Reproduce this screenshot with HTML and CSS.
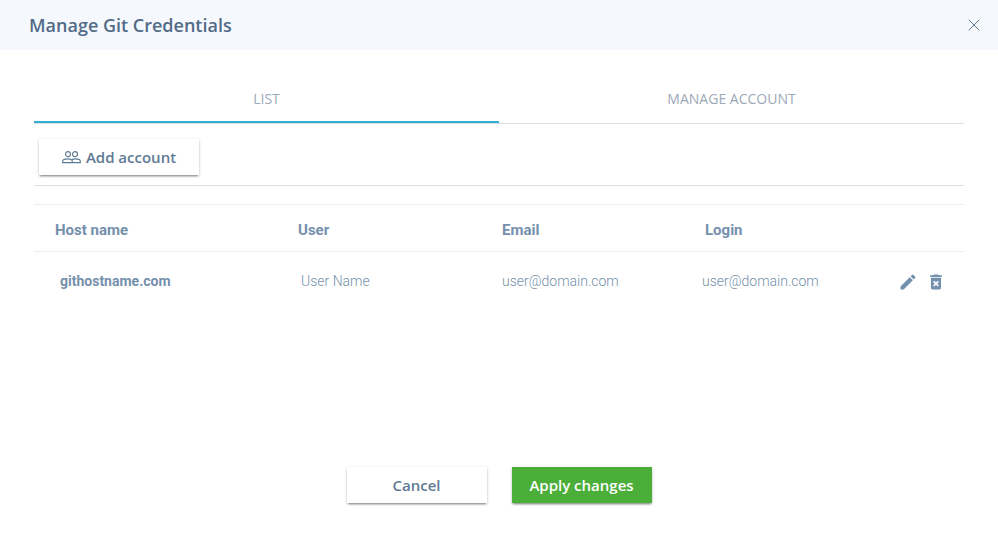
FILE: index.html
```html
<!DOCTYPE html>
<html lang="en">
<head>
<meta charset="utf-8">
<title>Manage Git Credentials</title>
<link rel="stylesheet" href="styles.css">
</head>
<body>
<div class="dialog" role="dialog" aria-labelledby="title">
  <header class="dialog-header">
    <h1 class="dialog-title" id="title">Manage Git Credentials</h1>
    <button class="icon-button" type="button" aria-label="Close">
      <svg width="12" height="12" viewBox="0 0 12 12" fill="none" stroke="currentColor"><path d="M.7.7l10.6 10.6M11.3.7L.7 11.3"/></svg>
    </button>
  </header>
  <main class="dialog-body">
    <div class="tabs" role="tablist">
      <button class="tab tab-active" type="button" role="tab" aria-selected="true">LIST</button>
      <button class="tab" type="button" role="tab" aria-selected="false">MANAGE ACCOUNT</button>
    </div>
    <div class="toolbar">
      <button class="button button-add" type="button">
        <svg width="19" height="14" viewBox="0 0 20 14" fill="none" stroke="currentColor" stroke-width="1.2"><circle cx="6.3" cy="4" r="2.6"/><circle cx="13.7" cy="4" r="2.6"/><path d="M.7 12.9v-1.4c0-1.5 2.5-2.6 5.2-2.6 1.8 0 3.2.4 4.1 1.1.9-.7 2.3-1.1 4.1-1.1 2.7 0 5.2 1.1 5.2 2.6v1.4zM10 10c.6.4.9.9.9 1.5v1.4"/></svg>
        <span>Add account</span>
      </button>
    </div>
    <table class="accounts">
      <thead>
        <tr class="head-row"><th>Host name</th><th>User</th><th>Email</th><th>Login</th></tr>
      </thead>
      <tbody>
        <tr class="account-row">
          <th scope="row">githostname.com</th><td>User Name</td><td>user@domain.com</td><td>user@domain.com</td>
          <td class="actions">
            <button class="icon-button" type="button" aria-label="Edit">
              <svg width="20" height="20" viewBox="0 0 24 24" fill="currentColor"><path d="M3 17.25V21h3.75L17.81 9.94l-3.75-3.75L3 17.25zM20.71 7.04a1 1 0 0 0 0-1.41l-2.34-2.34a1 1 0 0 0-1.41 0l-1.83 1.83 3.75 3.75 1.83-1.83z"/></svg>
            </button>
            <button class="icon-button" type="button" aria-label="Delete">
              <svg width="20" height="20" viewBox="0 0 24 24" fill="currentColor"><path d="M6 19c0 1.1.9 2 2 2h8c1.1 0 2-.9 2-2V7H6v12zm2.46-7.12l1.41-1.41L12 12.59l2.12-2.12 1.41 1.41L13.41 14l2.12 2.12-1.41 1.41L12 15.41l-2.12 2.12-1.41-1.41L10.59 14l-2.13-2.12zM15.5 4l-1-1h-5l-1 1H5v2h14V4z"/></svg>
            </button>
          </td>
        </tr>
      </tbody>
    </table>
  </main>
  <footer class="dialog-footer">
    <button class="button" type="button">Cancel</button>
    <button class="button button-primary" type="button">Apply changes</button>
  </footer>
</div>
</body>
</html>
```

FILE: styles.css
```css
* {
  box-sizing: border-box;
}

body {
  margin: 0;
  background: #fff;
  color: #5f7a93;
  font-family: "Open Sans", sans-serif;
}

button {
  margin: 0;
  padding: 0;
  border: 0;
  background: none;
  color: inherit;
  font: inherit;
  cursor: pointer;
}

svg {
  display: block;
}

.dialog {
  display: flex;
  flex-direction: column;
  min-height: 100vh;
}

.dialog-header {
  display: flex;
  align-items: center;
  justify-content: space-between;
  height: 50px;
  padding: 0 18px 0 29px;
  background: #f5f9fe;
}

.dialog-title {
  margin: 0;
  color: #526b86;
  font-size: 18px;
  font-weight: 600;
}

.dialog-body {
  padding: 24px 34px;
}

.tabs {
  display: flex;
  height: 50px;
  border-bottom: 1px solid #dcdfe1;
}

.tab {
  flex: 1;
  padding-top: 2px;
  border-bottom: 2px solid transparent;
  color: #9ca9b8;
  font-size: 14px;
}

.tab-active {
  border-color: #33add6;
}

.toolbar {
  padding: 15px 5px 10px;
  border-bottom: 1px solid #dcdfe1;
}

.button {
  display: flex;
  align-items: center;
  justify-content: center;
  width: 140px;
  height: 36px;
  background: #fff;
  box-shadow: 0 1px 3px rgba(0, 0, 0, .2), 0 2px 2px -1px rgba(0, 0, 0, .4);
  font-size: 15px;
  font-weight: 600;
}

.button-add {
  gap: 5px;
  width: 160px;
}

.button-primary {
  background: #4aae38;
  color: #fff;
}

.accounts {
  display: block;
  margin-top: 18px;
  color: #7590ac;
  font-family: Roboto, sans-serif;
}

.accounts thead,
.accounts tbody {
  display: block;
}

.accounts th,
.accounts td {
  padding: 0;
  text-align: left;
}

.head-row,
.account-row {
  display: grid;
  align-items: center;
}

.head-row {
  grid-template-columns: 243fr 204fr 203fr 238fr;
  height: 48px;
  padding: 3px 21px 0;
  border: solid #eaedf1;
  border-width: 1px 0;
  font-size: 15px;
}

.account-row {
  grid-template-columns: 241fr 201fr 200fr 196fr auto;
  height: 58px;
  padding: 0 18px 0 26px;
  font-size: 14px;
}

.account-row td {
  font-weight: 300;
}

.account-row .actions {
  display: flex;
  gap: 8px;
  padding-top: 2px;
}

.dialog-footer {
  display: flex;
  justify-content: center;
  gap: 25px;
  margin-top: auto;
  padding-bottom: 45px;
}
```
